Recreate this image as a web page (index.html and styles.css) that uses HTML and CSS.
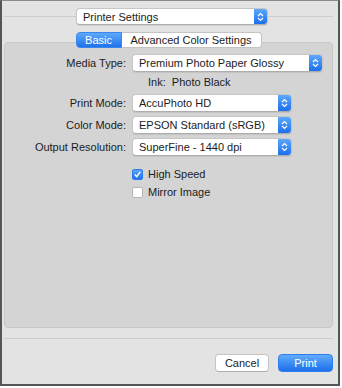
FILE: index.html
```html
<!DOCTYPE html>
<html lang="en">
<head>
  <meta charset="UTF-8">
  <title>Print</title>
  <link rel="stylesheet" href="styles.css">
</head>
<body>
  <div class="window">
    <!-- top preset popup -->
    <div class="top-row">
      <div class="line line-left"></div>
      <div class="popup popup-top">
        <span class="popup-text">Printer Settings</span>
        <span class="stepper">
          <svg width="7" height="10" viewBox="0 0 7 10"><path d="M1 4 L3.5 1.5 L6 4 M1 6 L3.5 8.5 L6 6" fill="none" stroke="#fff" stroke-width="1.2"/></svg>
        </span>
      </div>
      <div class="line"></div>
    </div>

    <div class="tabs">
      <div class="tab tab-active">Basic</div>
      <div class="tab">Advanced Color Settings</div>
    </div>

    <div class="group">
      <div class="row row-media">
        <label class="label">Media Type:</label>
        <div class="popup popup-wide">
          <span class="popup-text">Premium Photo Paper Glossy</span>
          <span class="stepper">
            <svg width="7" height="10" viewBox="0 0 7 10"><path d="M1 4 L3.5 1.5 L6 4 M1 6 L3.5 8.5 L6 6" fill="none" stroke="#fff" stroke-width="1.2"/></svg>
          </span>
        </div>
      </div>

      <div class="row row-ink">
        <span class="label"></span>
        <span class="ink">Ink:&nbsp; Photo Black</span>
      </div>

      <div class="row row-print">
        <label class="label">Print Mode:</label>
        <div class="popup">
          <span class="popup-text">AccuPhoto HD</span>
          <span class="stepper">
            <svg width="7" height="10" viewBox="0 0 7 10"><path d="M1 4 L3.5 1.5 L6 4 M1 6 L3.5 8.5 L6 6" fill="none" stroke="#fff" stroke-width="1.2"/></svg>
          </span>
        </div>
      </div>

      <div class="row">
        <label class="label">Color Mode:</label>
        <div class="popup">
          <span class="popup-text">EPSON Standard (sRGB)</span>
          <span class="stepper">
            <svg width="7" height="10" viewBox="0 0 7 10"><path d="M1 4 L3.5 1.5 L6 4 M1 6 L3.5 8.5 L6 6" fill="none" stroke="#fff" stroke-width="1.2"/></svg>
          </span>
        </div>
      </div>

      <div class="row">
        <label class="label">Output Resolution:</label>
        <div class="popup">
          <span class="popup-text">SuperFine - 1440 dpi</span>
          <span class="stepper">
            <svg width="7" height="10" viewBox="0 0 7 10"><path d="M1 4 L3.5 1.5 L6 4 M1 6 L3.5 8.5 L6 6" fill="none" stroke="#fff" stroke-width="1.2"/></svg>
          </span>
        </div>
      </div>

      <div class="checks">
        <div class="check-row">
          <span class="box box-on">
            <svg width="9" height="9" viewBox="0 0 9 9"><path d="M1.8 4.6 L3.7 6.6 L7.3 1.8" fill="none" stroke="#fff" stroke-width="1.4"/></svg>
          </span>
          <span>High Speed</span>
        </div>
        <div class="check-row">
          <span class="box"></span>
          <span>Mirror Image</span>
        </div>
      </div>
    </div>

    <div class="bottom-line"></div>

    <div class="buttons">
      <div class="btn">Cancel</div>
      <div class="btn btn-primary">Print</div>
    </div>
  </div>
</body>
</html>
```

FILE: styles.css
```css
/* Global */
body {
  margin: 0;
  padding: 0;
  background: #fff;
  font-family: 'Liberation Sans', Arial, sans-serif;
  font-size: 11px;
  color: #1c1c1c;
}

.window {
  width: 340px;
  height: 386px;
  box-sizing: border-box;
  background: #e3e3e3;
  border: 2px solid #555;
  border-top: 1px solid #8a8a8a;
  padding: 7px 5px 0 2px;
  display: flex;
  flex-direction: column;
}

/* Top preset row */
.top-row {
  display: flex;
  align-items: center;
  height: 17px;
}

.line {
  flex: 1;
  height: 1px;
  background: #cdcdcd;
}

.line-left {
  flex: 0 0 72px;
}

/* Popup buttons */
.popup {
  width: 160px;
  height: 18px;
  box-sizing: border-box;
  background: #fff;
  border: 1px solid #c6c6c6;
  border-bottom-color: #adadad;
  border-radius: 4px;
  box-shadow: 0 1px 1px rgba(0, 0, 0, 0.08);
  display: flex;
  align-items: center;
  overflow: hidden;
}

.popup-top {
  width: 192px;
  height: 17px;
}

.popup-wide {
  width: 191px;
}

.popup-text {
  flex: 1;
  padding-left: 6px;
  white-space: nowrap;
}

.stepper {
  width: 13px;
  height: 100%;
  background: linear-gradient(#5ca8fa, #1d70eb);
  display: flex;
  align-items: center;
  justify-content: center;
}

/* Tabs */
.tabs {
  display: flex;
  justify-content: center;
  margin-top: 7px;
  position: relative;
  z-index: 1;
}

.tab {
  height: 16px;
  box-sizing: border-box;
  display: flex;
  align-items: center;
  justify-content: center;
  background: #fff;
  border: 1px solid #c4c4c4;
  border-left: none;
  border-radius: 0 4px 4px 0;
  width: 140px;
}

.tab-active {
  width: 46px;
  background: linear-gradient(#5ea9fb, #1f72ec);
  border: 1px solid #3a86ef;
  border-radius: 4px 0 0 4px;
  color: #fff;
}

/* Group box */
.group {
  margin-top: -6px;
  height: 286px;
  box-sizing: border-box;
  background: #d4d4d4;
  border: 1px solid #c8c8c8;
  border-radius: 4px;
  padding-top: 11px;
}

.row {
  display: flex;
  align-items: center;
  gap: 6px;
  margin-top: 4px;
}

.row-media {
  margin-top: 0;
}

.row-ink {
  height: 14px;
  margin-top: 3px;
}

.row-print {
  margin-top: 5px;
}

.label {
  width: 121px;
  text-align: right;
  white-space: nowrap;
}

.ink {
  padding-left: 16px;
}

/* Checkboxes */
.checks {
  margin-top: 12px;
  padding-left: 127px;
  display: flex;
  flex-direction: column;
  gap: 6px;
}

.check-row {
  display: flex;
  align-items: center;
  gap: 5px;
  height: 12px;
}

.box {
  width: 11px;
  height: 11px;
  box-sizing: border-box;
  background: #fff;
  border: 1px solid #b5b5b5;
  border-radius: 2px;
  display: flex;
  align-items: center;
  justify-content: center;
}

.box-on {
  background: linear-gradient(#5ca8fa, #2073eb);
  border-color: #2a7aee;
}

/* Bottom */
.bottom-line {
  margin-top: 10px;
  height: 1px;
  background: #cbcbcb;
}

.buttons {
  display: flex;
  justify-content: flex-end;
  gap: 9px;
  margin-top: 15px;
}

.btn {
  width: 54px;
  height: 18px;
  box-sizing: border-box;
  background: #fff;
  border: 1px solid #c4c4c4;
  border-bottom-color: #acacac;
  border-radius: 4px;
  display: flex;
  align-items: center;
  justify-content: center;
}

.btn-primary {
  width: 55px;
  background: linear-gradient(#62acfb, #1c6fea);
  border-color: #2f7eee;
  color: #fff;
}
```
